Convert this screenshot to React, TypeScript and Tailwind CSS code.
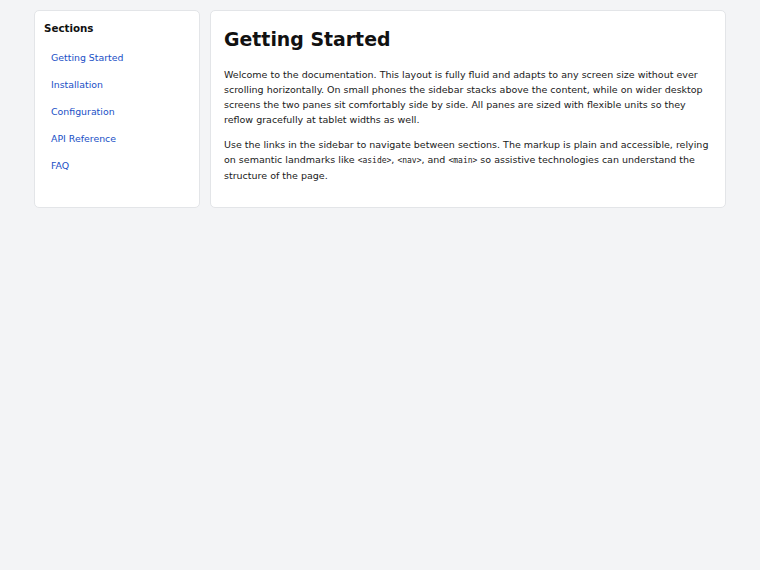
import React from "react"

const sections = [
  { id: "getting-started", label: "Getting Started" },
  { id: "installation", label: "Installation" },
  { id: "configuration", label: "Configuration" },
  { id: "api", label: "API Reference" },
  { id: "faq", label: "FAQ" },
]

function Code({ children }: { children: React.ReactNode }) {
  return <code className="font-['DejaVu_Sans_Mono',monospace] text-[8px]">{children}</code>
}

export default function App() {
  return (
    <div className="min-h-screen bg-[#f3f4f6] font-['DejaVu_Sans',sans-serif] text-[#1a1a1a]">
      <div className="flex items-stretch gap-[10px] px-[34px] pt-[10px]">
        <aside className="w-[166px] shrink-0 rounded-[5px] border border-[#e3e5e8] bg-white px-[9px] pt-[10px]">
          <h2 className="text-[10.3px] font-bold leading-[14px] text-[#111]">Sections</h2>
          <nav className="mt-[9px]">
            <ul className="flex flex-col">
              {sections.map((s) => (
                <li key={s.id}>
                  <a
                    href={`#${s.id}`}
                    className="block px-[7px] py-[6px] text-[9.4px] leading-[15px] text-[#1a4fc6]"
                  >
                    {s.label}
                  </a>
                </li>
              ))}
            </ul>
          </nav>
        </aside>
        <main className="flex-1 rounded-[5px] border border-[#e3e5e8] bg-white px-[13px] pt-[17px] pb-[14px]">
          <h1 className="text-[18.9px] font-bold leading-[22px] text-[#111]">Getting Started</h1>
          <p className="mt-[17px] mb-[10px] text-[9.5px] leading-[15px]">
            Welcome to the documentation. This layout is fully fluid and adapts to any screen size without ever
            scrolling horizontally. On small phones the sidebar stacks above the content, while on wider desktop
            screens the two panes sit comfortably side by side. All panes are sized with flexible units so they
            reflow gracefully at tablet widths as well.
          </p>
          <p className="mb-[10px] text-[9.5px] leading-[15px]">
            Use the links in the sidebar to navigate between sections. The markup is plain and accessible, relying
            on semantic landmarks like <Code>&lt;aside&gt;</Code>, <Code>&lt;nav&gt;</Code>, and{" "}
            <Code>&lt;main&gt;</Code> so assistive technologies can understand the structure of the page.
          </p>
        </main>
      </div>
    </div>
  )
}
